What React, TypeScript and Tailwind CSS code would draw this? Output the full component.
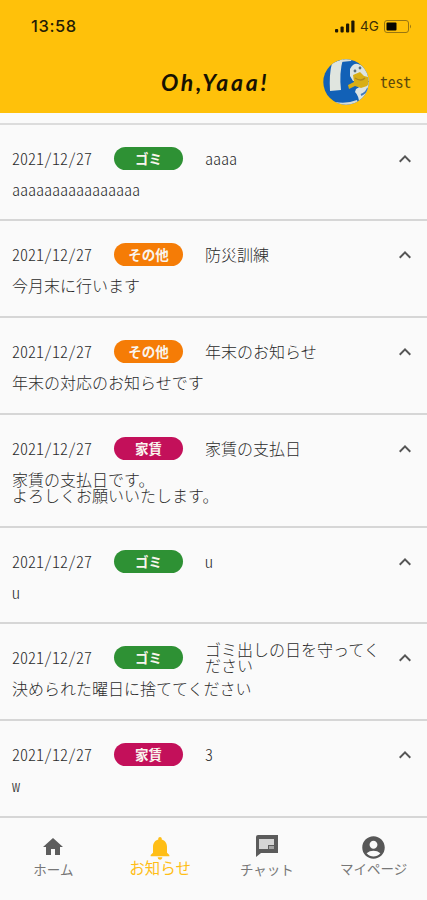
import React from "react";
import { MdHome, MdNotifications, MdAccountCircle, MdKeyboardArrowUp } from "react-icons/md";

type Kind = "garbage" | "other" | "rent";

const badges: Record<Kind, { label: string; color: string }> = {
  garbage: { label: "ゴミ", color: "bg-[#2e9134]" },
  other: { label: "その他", color: "bg-[#f57c06]" },
  rent: { label: "家賃", color: "bg-[#c3105a]" },
};

const notices: { kind: Kind; title: string; lines: string[]; height: string }[] = [
  { kind: "garbage", title: "aaaa", lines: ["aaaaaaaaaaaaaaaa"], height: "h-[96px]" },
  { kind: "other", title: "防災訓練", lines: ["今月末に行います"], height: "h-[97px]" },
  { kind: "other", title: "年末のお知らせ", lines: ["年末の対応のお知らせです"], height: "h-[97px]" },
  { kind: "rent", title: "家賃の支払日", lines: ["家賃の支払日です。", "よろしくお願いいたします。"], height: "h-[113px]" },
  { kind: "garbage", title: "u", lines: ["u"], height: "h-[96px]" },
  { kind: "garbage", title: "ゴミ出しの日を守ってください", lines: ["決められた曜日に捨ててください"], height: "h-[97px]" },
  { kind: "rent", title: "3", lines: ["w"], height: "h-[97px]" },
];

function StatusBar() {
  return (
    <div className="flex h-[52px] items-center justify-between pl-[31px] pr-[15px]">
      <span className="font-['Inter',sans-serif] text-[16.5px] font-medium tracking-[0.6px] text-[#251c05]">13:58</span>
      <div className="flex items-center">
        <svg width="20" height="13" viewBox="0 0 20 13" fill="#1d1603">
          <rect x="0" y="9" width="3.2" height="3.5" rx="1" />
          <rect x="5.5" y="6.5" width="3.2" height="6" rx="1" />
          <rect x="11" y="3.5" width="3.2" height="9" rx="1" />
          <rect x="16.3" y="0.5" width="3.2" height="12" rx="1" />
        </svg>
        <span className="ml-[5px] w-[19px] font-['Inter',sans-serif] text-[13.5px] text-[#3b2e06]">4G</span>
        <svg className="ml-[5px]" width="28" height="13" viewBox="0 0 28 13">
          <rect x="0.5" y="0.5" width="24" height="12" rx="2.5" fill="none" stroke="#987611" />
          <rect x="2.5" y="2.5" width="10" height="8" rx="1" fill="#080600" />
          <path d="M26 4.5Q28 6.5 26 8.5z" fill="#987611" />
        </svg>
      </div>
    </div>
  );
}

function Avatar() {
  return (
    <svg width="46" height="46" viewBox="0 0 46 46">
      <defs>
        <clipPath id="avatar"><circle cx="23" cy="23" r="22.7" /></clipPath>
      </defs>
      <g clipPath="url(#avatar)">
        <rect width="46" height="46" fill="#1261b7" />
        <path d="M9 4L20 0Q16 14 18 31L7 32Q6 15 9 4z" fill="#e0e5df" />
        <path d="M17 0H29L28 2L18 3z" fill="#dce1dc" />
        <path d="M27 10Q30 4 35 5Q43 7 47 18V22L30 22L27 17z" fill="#dde4e2" />
        <path d="M33 30L47 22V43L36 44Q36 37 32 33z" fill="#dde4e2" />
        <path d="M12 43Q24 45 34 41L36 46H12z" fill="#d7ddd8" />
        <circle cx="32" cy="12" r="1.4" fill="#5d6f7b" />
        <circle cx="37" cy="9" r="1.4" fill="#5d6f7b" />
        <path d="M30 16L37 13L41 17L45 18Q47 25 44 27L38 29L32 27L26 30L25 26L31 23z" fill="#d8ae16" />
        <path d="M32 19Q38 23 42 19" fill="none" stroke="#ae8820" strokeWidth="1.3" />
        <path d="M38 36Q43 34 45 29" fill="none" stroke="#427abc" strokeWidth="2" />
      </g>
    </svg>
  );
}

function ChatIcon() {
  return (
    <svg width="24" height="24" viewBox="0 0 24 24">
      <path d="M1 2Q1 0 3 0H23V18H6L1 22z" fill="#5b5b5b" />
      <path d="M4 4H19V10H13V14H4z" fill="#d4d4d4" />
      <path d="M14 11H19V14H14z" fill="#a4a4a4" />
    </svg>
  );
}

export default function App() {
  return (
    <main className="flex h-[900px] w-[427px] flex-col overflow-hidden bg-[#fafafa] font-['Noto_Sans_CJK_JP',sans-serif] text-[#2b2b2b]">
      <header className="h-[113px] shrink-0 bg-[#ffc10a]">
        <StatusBar />
        <div className="flex h-[60px] items-center pl-[161px] pr-[16px]">
          <h1 className="w-[162px] pt-px font-['Lato',sans-serif] text-[23px] font-bold italic leading-none tracking-[2.7px] text-[#171202]">Oh,Yaaa!</h1>
          <Avatar />
          <span className="ml-[11px] text-[15.5px] leading-none text-[#5c490d] [font-feature-settings:'hwid']">test</span>
        </div>
      </header>
      <div className="h-[12px] shrink-0 border-b-2 border-[#dcdcdc]" />
      <section className="text-[16px] leading-4 font-light [font-feature-settings:'hwid']">
        {notices.map((notice, index) => (
          <article key={index} className={`${notice.height} border-b-2 border-[#d6d6d6] pl-3`}>
            <div className="flex h-[56px] items-center pt-[11px]">
              <time className="w-[102px] shrink-0 pb-[2px]">2021/12/27</time>
              <span className={`${badges[notice.kind].color} flex h-[23px] w-[69px] shrink-0 items-center justify-center rounded-full pb-[2px] text-[13.5px] font-bold text-[#f9f5ee]`}>
                {badges[notice.kind].label}
              </span>
              <h2 className="ml-[22px] w-[178px] shrink-0 break-all pb-[2px]">{notice.title}</h2>
              <MdKeyboardArrowUp className="ml-[10px] size-[24px] shrink-0 text-[#555]" />
            </div>
            <div>{notice.lines.map((line) => <p key={line}>{line}</p>)}</div>
          </article>
        ))}
      </section>
      <nav className="grid flex-1 grid-cols-4 text-[#777]">
        <div className="flex flex-col items-center pt-[17px]">
          <MdHome className="size-6 text-[#5d5d5d]" />
          <span className="mt-0.5 text-[13.5px] leading-4">ホーム</span>
        </div>
        <div className="flex flex-col items-center pt-4 text-[#ffbe16]">
          <MdNotifications className="size-[28px]" />
          <span className="-mt-[3px] text-[15.5px] leading-4">お知らせ</span>
        </div>
        <div className="flex flex-col items-center pt-[17px]">
          <ChatIcon />
          <span className="mt-0.5 text-[13.5px] leading-4">チャット</span>
        </div>
        <div className="flex flex-col items-center pt-4">
          <MdAccountCircle className="size-[27px] text-[#575757]" />
          <span className="-mt-px text-[13.5px] leading-4">マイページ</span>
        </div>
      </nav>
    </main>
  );
}
